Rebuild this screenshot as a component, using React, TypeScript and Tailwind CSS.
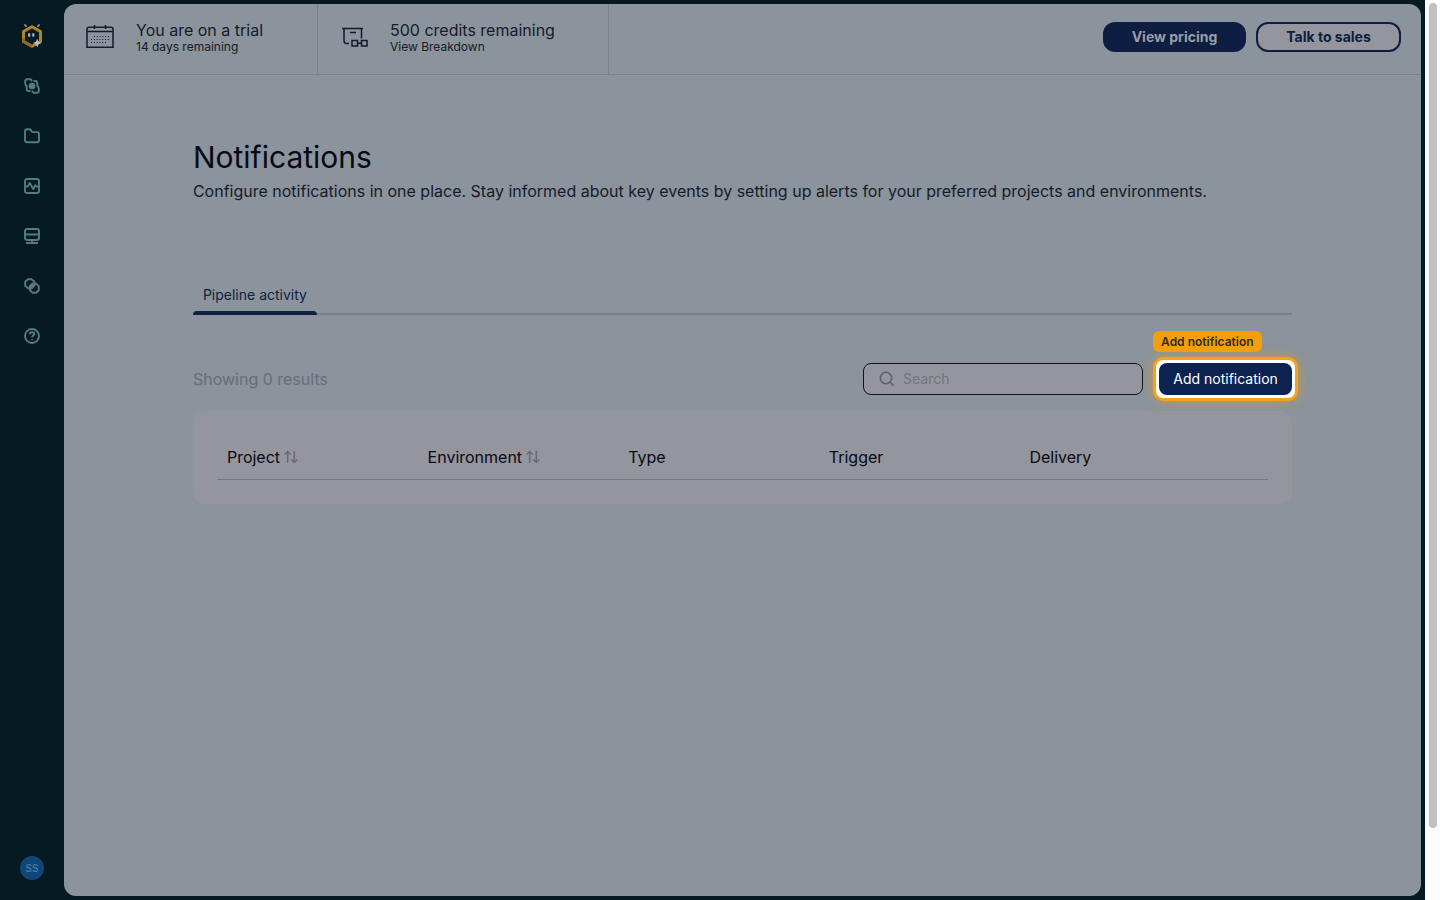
import type { ReactNode } from "react";

interface NavItem {
  label: string;
  icon: ReactNode;
}

interface Column {
  label: string;
  sortable?: boolean;
}

const NAV_ITEMS: NavItem[] = [
  {
    label: "Pipelines",
    icon: (
      <>
        <path d="M1.200 6.500V3.200a2 2 0 0 1 2-2h3.200l1.800 1.800M9.500 3h1.800a2 2 0 0 1 2 2v1.500M14.800 9.500v3.300a2 2 0 0 1-2 2H9.600L7.800 13M6.500 13H4.700a2 2 0 0 1-2-2V9.500M1.200 6.500l1.500 1.500v1.500M14.800 9.500L13.300 8V6.500" />
        <circle cx="8" cy="8" r="2.400" fill="currentColor" />
      </>
    ),
  },
  {
    label: "Projects",
    icon: (
      <path d="M1 3.200C1 2 1.800 1.200 3 1.200h2.200c.7 0 1.200.3 1.600.9l.9 1.300c.3.500.7.700 1.300.700h4c1.200 0 2 .8 2 2v6.200c0 1.200-.8 2-2 2H3c-1.200 0-2-.8-2-2z" />
    ),
  },
  {
    label: "Observability",
    icon: (
      <>
        <rect x="1" y="1" width="14" height="14" rx="2" />
        <path d="M1 8.500h2.600L5.800 5l3.400 6 2-3.800 1 1.300H15" />
      </>
    ),
  },
  {
    label: "Environments",
    icon: (
      <>
        <rect x="1" y="1" width="14" height="11" rx="2" />
        <path d="M1 6.500h14M8 12v3M2 15h12" />
      </>
    ),
  },
  {
    label: "Integrations",
    icon: (
      <>
        <path d="M4 1.200h3.400l3 2.200v4L7.600 10.400H4L1.200 7.800V3.600z" />
        <path d="M8.600 5.600h3.600l2.600 2.600v4L12 14.800H8.600L5.800 12V8.200z" />
        <path d="M8.600 5.600h1.800v1.800l-2.800 3H5.800V8.200z" fill="currentColor" />
      </>
    ),
  },
  {
    label: "Help",
    icon: (
      <>
        <circle cx="8" cy="8" r="7" />
        <path d="M5.900 6.200C5.900 5 6.800 4.200 8 4.200s2.200.8 2.200 1.900c0 1.500-2.200 1.600-2.200 3.100M8 11v1.200" />
      </>
    ),
  },
];

const COLUMNS: Column[] = [
  { label: "Project", sortable: true },
  { label: "Environment", sortable: true },
  { label: "Type" },
  { label: "Trigger" },
  { label: "Delivery" },
];

function Logo() {
  return (
    <svg viewBox="0 0 24 26" className="h-[26px] w-6" fill="none">
      <path d="M5 2 6 3.200M19 2 18 3.200" stroke="#92948f" strokeWidth="1.800" strokeLinecap="round" />
      <path d="M12 3.700 20.500 8.500v10L12 23.300 3.500 18.500v-10z" stroke="#b18425" strokeWidth="3" strokeLinejoin="round" />
      <path d="M3.500 15v3.500L12 23.300" stroke="#8f6a24" strokeWidth="3" strokeLinejoin="round" />
      <ellipse cx="9.200" cy="12" rx="1.300" ry="1.900" fill="#a0a5a9" />
      <ellipse cx="13.300" cy="12" rx="1.300" ry="1.900" fill="#a0a5a9" />
      <path d="m17.200 15.800 1.300 2.900 3 1.300-3 1.300-1.300 2.900-1.300-2.900L13 20l2.900-1.300z" fill="#c0c0c0" />
    </svg>
  );
}

function CalendarIcon() {
  return (
    <svg viewBox="0 0 28 24" className="h-6 w-7" fill="none" stroke="currentColor" strokeWidth="1.500">
      <path d="M1 6.500V5.200c0-1.300.7-1.900 2-1.900h22c1.300 0 2 .6 2 1.900v18H1zM1 7.500h26M8.500 1v4M19.500 1v4" />
      <path d="M8 12.500h15M5 15.500h18M5 18.500h15" strokeWidth="1" strokeDasharray="1 1.800" />
    </svg>
  );
}

function CreditsIcon() {
  return (
    <svg viewBox="0 0 28 24" className="h-6 w-7" fill="none" stroke="currentColor" strokeWidth="1.500">
      <path d="M2 4.500h21M4 4.500v12.200c0 1.700.8 2.700 2.500 2.700H9M21.500 4.500v10M10 8.500h6" />
      <path d="M12 16.500h5.500v5.500H12zM21.500 16.500H27v5.500h-5.500zM17.500 19.200h4" />
    </svg>
  );
}

function SortIcon() {
  return (
    <svg viewBox="0 0 14 14" className="h-3.5 w-3.5 text-[#686b73]" fill="none" stroke="currentColor" strokeWidth="1.500">
      <path d="M3.700 13V1.500M.7 4.500l3-3 3 3M10.300 1v11.500M7.300 9.500l3 3 3-3" />
    </svg>
  );
}

function Sidebar() {
  return (
    <aside className="flex w-16 shrink-0 flex-col items-center pt-[23px] pb-5">
      <a href="#" aria-label="Home">
        <Logo />
      </a>
      <nav className="mt-[29px] flex flex-col gap-[34px]">
        {NAV_ITEMS.map((item) => (
          <a key={item.label} href="#" aria-label={item.label} className="block text-[#557b7e]">
            <svg viewBox="0 0 16 16" className="h-4 w-4" fill="none" stroke="currentColor" strokeWidth="1.900" strokeLinejoin="round">
              {item.icon}
            </svg>
          </a>
        ))}
      </nav>
      <button className="mt-auto h-6 w-6 rounded-full bg-[#104679] text-[10px] text-[#5d86ab]">SS</button>
    </aside>
  );
}

function TopBar() {
  return (
    <header className="flex h-[71px] shrink-0 border-b border-[#7c838d]">
      <div className="flex w-[254px] items-start gap-[22px] border-r border-[#7c838d] pt-5 pl-[22px]">
        <CalendarIcon />
        <div className="-mt-1">
          <p className="text-base leading-5">You are on a trial</p>
          <p className="text-xs leading-3.5">14 days remaining</p>
        </div>
      </div>
      <div className="flex w-[291px] items-start gap-[22px] border-r border-[#7c838d] pt-5 pl-[22px]">
        <CreditsIcon />
        <div className="-mt-1">
          <p className="text-base leading-5">500 credits remaining</p>
          <a href="#" className="block text-xs leading-3.5">View Breakdown</a>
        </div>
      </div>
      <div className="ml-auto flex gap-2.5 pt-[18px] pr-5">
        <button className="h-[30px] w-[143px] rounded-xl bg-[#0e1d42] text-sm font-bold text-[#9a9ca5]">
          View pricing
        </button>
        <button className="h-[30px] w-[145px] rounded-xl border-2 border-[#0e1d42] bg-[#94959d] text-sm font-bold text-[#0e1d42]">
          Talk to sales
        </button>
      </div>
    </header>
  );
}

function AddNotification() {
  return (
    <div className="relative">
      <div className="pointer-events-none absolute -inset-[6px] rounded-[10px] border-3 border-[#f5a21b] bg-white shadow-[0_0_12px_rgba(245,158,11,0.6)]" />
      <button className="relative h-8 w-[133px] rounded-lg bg-[#0c2352] text-sm text-white">Add notification</button>
      <span className="absolute -top-8 -left-[6px] rounded-md bg-[#f59e0b] px-2 text-xs leading-[21px] font-semibold whitespace-nowrap text-[#33291b]">
        Add notification
      </span>
    </div>
  );
}

function Toolbar() {
  return (
    <div className="mt-12 flex items-center">
      <p className="text-base text-[#686d76]">Showing 0 results</p>
      <label className="mr-4 ml-auto flex h-8 w-[280px] items-center gap-2 rounded-lg border border-[#10121c] bg-[#94959d] pl-[15px]">
        <svg viewBox="0 0 16 16" className="h-4 w-4 shrink-0 text-[#5d616a]" fill="none" stroke="currentColor" strokeWidth="1.600">
          <circle cx="7" cy="7" r="5.700" />
          <path d="m11.200 11.200 3.500 3.500" />
        </svg>
        <input
          type="text"
          aria-label="Search"
          placeholder="Search"
          className="min-w-0 flex-1 bg-transparent text-sm outline-none placeholder:text-[#72757e]"
        />
      </label>
      <AddNotification />
    </div>
  );
}

function NotificationsTable() {
  return (
    <div className="mt-4 rounded-xl bg-[#94959d] p-6">
      <table className="w-full table-fixed text-left text-base text-[#070a14]">
        <thead>
          <tr className="h-11 border-b border-[#757983]">
            {COLUMNS.map((col) => (
              <th key={col.label} className="pl-2.5 font-normal">
                <span className="flex items-center gap-1">
                  {col.label}
                  {col.sortable && <SortIcon />}
                </span>
              </th>
            ))}
            <th className="w-12" aria-label="Actions" />
          </tr>
        </thead>
        <tbody />
      </table>
    </div>
  );
}

export default function App() {
  return (
    <div className="flex h-screen bg-[#061b21] font-[Inter,sans-serif] text-[#171a29]">
      <Sidebar />
      <main className="my-1 mr-1 flex min-w-0 flex-1 flex-col rounded-xl bg-[#8b939c]">
        <TopBar />
        <div className="mx-auto w-[81%] pt-[62px]">
          <h1 className="text-3xl leading-10 text-[#070a14]">Notifications</h1>
          <p className="mt-0.5 text-base leading-6">
            Configure notifications in one place. Stay informed about key events by setting up alerts for your
            preferred projects and environments.
          </p>

          {/* Tabs */}
          <div role="tablist" className="mt-[72px] flex border-b-2 border-[#777f89]">
            <button
              role="tab"
              aria-selected="true"
              className="relative h-[38px] w-[124px] pt-0.5 text-sm whitespace-nowrap text-[#0f2142]"
            >
              Pipeline activity
              <span className="absolute inset-x-0 -bottom-0.5 h-1 rounded-t bg-[#0f2142]" />
            </button>
          </div>

          <Toolbar />
          <NotificationsTable />
        </div>
      </main>

      {/* Scroll track */}
      <div className="w-[15px] shrink-0 bg-[#fcfcfc] pt-[3px] pl-1">
        <div className="h-[92%] w-2 rounded-full bg-[#c1c1c1]" />
      </div>
    </div>
  );
}
